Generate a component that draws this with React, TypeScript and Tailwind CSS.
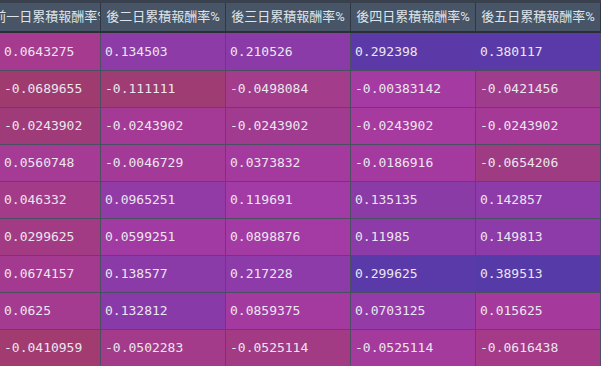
import React from "react";

const headers = [
  "前一日累積報酬率%",
  "後二日累積報酬率%",
  "後三日累積報酬率%",
  "後四日累積報酬率%",
  "後五日累積報酬率%",
];

const rows: [string, string][][] = [
  [["0.0643275", "bg-[#a63a8e]"], ["0.134503", "bg-[#8d3ba7]"], ["0.210526", "bg-[#8b3ba7]"], ["0.292398", "bg-[#5b3aa8]"], ["0.380117", "bg-[#5a3aa8]"]],
  [["-0.0689655", "bg-[#9f3b6e]"], ["-0.111111", "bg-[#a03c74]"], ["-0.0498084", "bg-[#a33c8a]"], ["-0.00383142", "bg-[#a53aa3]"], ["-0.0421456", "bg-[#a03c8c]"]],
  [["-0.0243902", "bg-[#9f3b78]"], ["-0.0243902", "bg-[#a43a96]"], ["-0.0243902", "bg-[#a03b90]"], ["-0.0243902", "bg-[#a63a9e]"], ["-0.0243902", "bg-[#a43a96]"]],
  [["0.0560748", "bg-[#a53b94]"], ["-0.0046729", "bg-[#a43a98]"], ["0.0373832", "bg-[#a53a9e]"], ["-0.0186916", "bg-[#a43aa0]"], ["-0.0654206", "bg-[#9e3b82]"]],
  [["0.046332", "bg-[#a33b88]"], ["0.0965251", "bg-[#923ba6]"], ["0.119691", "bg-[#a23ba5]"], ["0.135135", "bg-[#8a3ba6]"], ["0.142857", "bg-[#8c3ba8]"]],
  [["0.0299625", "bg-[#a23b84]"], ["0.0599251", "bg-[#a13aa2]"], ["0.0898876", "bg-[#a43aa4]"], ["0.11985", "bg-[#8c3ba8]"], ["0.149813", "bg-[#8c3ba8]"]],
  [["0.0674157", "bg-[#a43a90]"], ["0.138577", "bg-[#8b3ba7]"], ["0.217228", "bg-[#8d3ba8]"], ["0.299625", "bg-[#5a3aa8]"], ["0.389513", "bg-[#553aa8]"]],
  [["0.0625", "bg-[#a53b90]"], ["0.132812", "bg-[#883ba8]"], ["0.0859375", "bg-[#a43aa0]"], ["0.0703125", "bg-[#943ba8]"], ["0.015625", "bg-[#a53a9c]"]],
  [["-0.0410959", "bg-[#a13b70]"], ["-0.0502283", "bg-[#a33b8a]"], ["-0.0525114", "bg-[#a23b84]"], ["-0.0525114", "bg-[#a43a9c]"], ["-0.0616438", "bg-[#a43a88]"]],
];

const widths = ["w-[101px]", "w-[125px]", "w-[125px]", "w-[125px]", "w-[125px]"];

export default function App() {
  return (
    <div className="w-[601px] h-[366px] overflow-hidden bg-[#3a4350]">
      <div className="h-[3px] bg-[#38414d]" />
      <div className="flex h-[28px]">
        {headers.map((h, i) => (
          <div
            key={i}
            className={`${widths[i]} shrink-0 h-full bg-[#475566] border-r border-[#2f3742] flex items-center justify-center overflow-hidden whitespace-nowrap text-[13px] text-[#dfe4ea] font-['Roboto','Noto_Sans_CJK_TC',sans-serif]`}
          >
            <span className="shrink-0">{h}</span>
          </div>
        ))}
      </div>
      <div className="h-[2px] bg-[#2a2f38]" />
      {rows.map((r, ri) => (
        <div key={ri} className={`flex ${ri === 0 ? "h-[38px]" : "h-[37px]"}`}>
          {r.map(([v, c], ci) => (
            <div
              key={ci}
              className={`${widths[ci]} ${c} shrink-0 h-full border-r border-b border-[#4a4f62] flex items-center pl-[4px] overflow-hidden whitespace-nowrap text-[13px] text-[#ebe6ef] font-['DejaVu_Sans_Mono',monospace]`}
            >
              {v}
            </div>
          ))}
        </div>
      ))}
    </div>
  );
}
